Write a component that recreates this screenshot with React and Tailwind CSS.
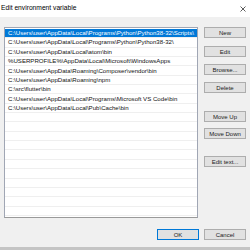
import React from "react";

const paths = [
  "C:\\Users\\user\\AppData\\Local\\Programs\\Python\\Python38-32\\Scripts\\",
  "C:\\Users\\user\\AppData\\Local\\Programs\\Python\\Python38-32\\",
  "C:\\Users\\user\\AppData\\Local\\atom\\bin",
  "%USERPROFILE%\\AppData\\Local\\Microsoft\\WindowsApps",
  "C:\\Users\\user\\AppData\\Roaming\\Composer\\vendor\\bin",
  "C:\\Users\\user\\AppData\\Roaming\\npm",
  "C:\\src\\flutter\\bin",
  "C:\\Users\\user\\AppData\\Local\\Programs\\Microsoft VS Code\\bin",
  "C:\\Users\\user\\AppData\\Local\\Pub\\Cache\\bin",
];

const rows = [...paths, ...Array(11).fill("")];

const Btn = ({ children, className = "", primary = false }) => (
  <div
    className={
      "w-[42px] h-[11px] flex items-center justify-center bg-[#e1e1e1] text-[6px] leading-none text-[#1a1a1a] border " +
      (primary ? "border-[#0078d7] " : "border-[#adadad] ") +
      className
    }
  >
    {children}
  </div>
);

export default function App() {
  return (
    <div
      className="w-[250px] h-[250px] bg-[#f0f0f0] flex flex-col overflow-hidden"
      style={{ fontFamily: '"Liberation Sans", Arial, sans-serif' }}
    >
      {/* title bar */}
      <div className="h-[17px] bg-white flex items-center justify-between pl-[1px] pr-[3px]">
        <span className="text-[6.7px] leading-none text-black">Edit environment variable</span>
        <svg width="6" height="6" viewBox="0 0 6 6" className="mr-[1px]">
          <path d="M0.5 0.5L5.5 5.5M5.5 0.5L0.5 5.5" stroke="#333" strokeWidth="0.8" />
        </svg>
      </div>

      <div className="flex mt-[10px]">
        {/* list */}
        <div className="ml-[4px] w-[194px] h-[191px] shrink-0 bg-white border border-[#a0a6b4] border-b-[#9a9a9a] overflow-hidden pt-px">
          {rows.map((p, i) => (
            <div
              key={i}
              className={
                "h-[9.35px] pl-[3px] flex items-center text-[6.1px] leading-none whitespace-nowrap border-b border-[#efefef] " +
                (i === 0 ? "bg-[#0078d7] text-white" : "text-[#111]")
              }
            >
              {p}
            </div>
          ))}
        </div>

        {/* buttons */}
        <div className="ml-[6px] flex flex-col">
          <Btn>New</Btn>
          <Btn className="mt-[8px]">Edit</Btn>
          <Btn className="mt-[7px]">Browse...</Btn>
          <Btn className="mt-[7px]">Delete</Btn>
          <Btn className="mt-[18px]">Move Up</Btn>
          <Btn className="mt-[6px]">Move Down</Btn>
          <Btn className="mt-[17px]">Edit text...</Btn>
        </div>
      </div>

      <div className="flex justify-end gap-[5px] mt-[11px] pr-[4px]">
        <Btn primary>OK</Btn>
        <Btn>Cancel</Btn>
      </div>

      <div className="mt-auto h-[3px] bg-[#c4c4c4]" />
    </div>
  );
}
